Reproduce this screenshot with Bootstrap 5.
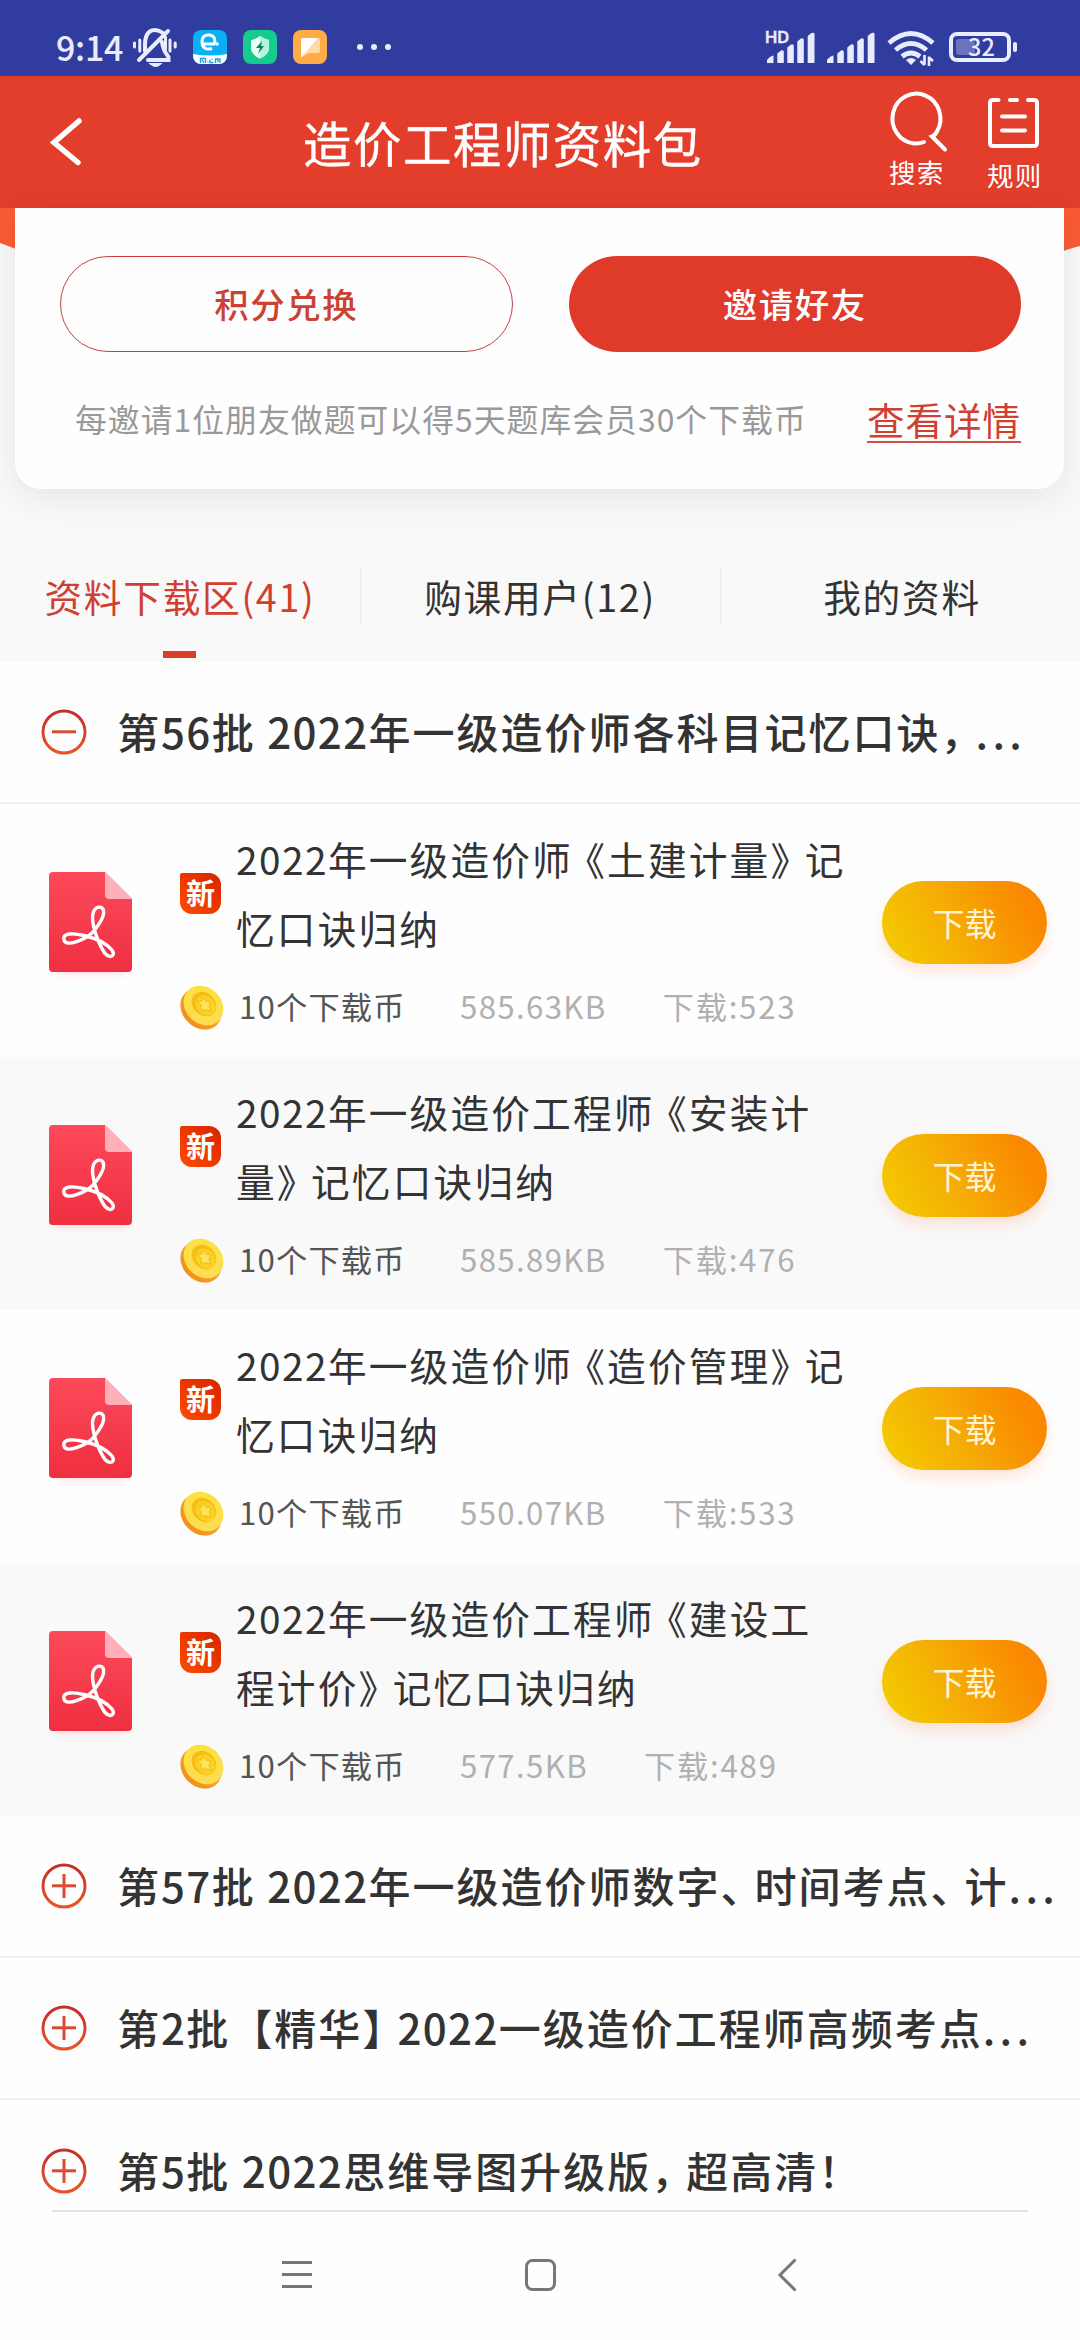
<!DOCTYPE html>
<html lang="zh-CN">
<head>
<meta charset="utf-8">
<meta name="viewport" content="width=device-width, initial-scale=1">
<title>造价工程师资料包</title>
<link href="https://cdn.jsdelivr.net/npm/bootstrap@5.3.0/dist/css/bootstrap.min.css" rel="stylesheet">
<style>
body{width:1080px;height:2340px;overflow:hidden;background:#fefefe;color:#333;font-family:"Noto Sans CJK SC",sans-serif;line-height:1}
svg{display:block;flex:none}
.t{white-space:nowrap}
.statusbar{height:76px;background:#303d9e;color:#e9ecff}
.clock{font-size:34px;line-height:40px;margin:27px 0 0 56px;width:76px;font-weight:500;letter-spacing:-.3px}
.topbar{height:132px;background:#e33d2b;color:#fff}
.page-title{font-size:48.5px;letter-spacing:1.45px;line-height:60px;margin:36px 0 0 -1px;font-weight:400;-webkit-text-stroke:.4px #fff}
.tool{font-size:26.5px;line-height:30px;letter-spacing:1.2px}
.hero{height:454px;background:#f9f9f9;position:relative}
.hero-bg{position:absolute;left:0;top:0}
.panel{position:relative;width:1049px;height:281px;margin-left:15px;background:#fefefe;border-radius:0 0 26px 26px;box-shadow:0 8px 36px rgba(0,0,0,.085);padding:48px 43px 0 45px}
.pill{height:96px;width:452.5px;border-radius:48px;font-size:34.4px;letter-spacing:1.6px;font-weight:500;padding:0 0 2px;line-height:1}
.pill-line,.pill-line:hover{border:1.5px solid #c5403f;color:#cb4234;background:#fefefe}
.pill-fill{border:0;background:#e03b2a;color:#fff}
.note{font-size:31.8px;letter-spacing:1.05px;color:#999;line-height:43px;padding-left:15px}
.detail{font-size:37.5px;letter-spacing:1px;color:#d04030;line-height:43px;border-bottom:2px solid #cf5148;text-decoration:none;height:46px}
.tabs-row{height:128px;margin-top:45px}
.tab-cell{width:360.5px;position:relative;font-size:37.7px;letter-spacing:1.7px;line-height:56px;padding-top:34px;text-align:center;height:128px}
.tab-cell+.tab-cell::before{content:"";position:absolute;left:0;top:34px;width:2px;height:56px;background:#eee}
.tab-cell:last-child{padding-left:4px}
.tab-on{color:#cf4030}
.tab-on::after{content:"";position:absolute;left:163px;bottom:4px;width:33px;height:7px;background:#dc3e2c}
.batch{height:142px;padding-left:41px;border-bottom:2px solid #efefef;background:#fefefe}
.batch .t{margin:-2px 0 0 30px;font-size:42px;letter-spacing:2px;font-weight:500;line-height:60px}
.batch .dots{letter-spacing:4.3px}
.batch .dg{letter-spacing:1.4px}
.batch .cm{letter-spacing:-7px}
.batch .dn{letter-spacing:-8px}
.batch .rb{letter-spacing:-7px}
.last{height:110px;border:0;align-items:flex-start!important;padding-top:48px}
.last .t{margin-top:-8px}
.item{height:253.1px;background:#fefefe;padding:20px 33px 0 49px}
.alt{background:#f9f9f9}
.pdf{margin-top:48px}
.body-col{width:660px;margin-left:47px}
.newtag{flex:none;width:41px;height:41px;margin-top:49px;border-radius:2px 12px 12px 12px;background:linear-gradient(225deg,#d62400,#ff4c00);color:#fff;font-size:29px;font-weight:700;line-height:39px;text-align:center}
.name{font-size:38.7px;letter-spacing:2.15px;line-height:69px;margin-left:15px;color:#333}
.lq,.rq{letter-spacing:-4.5px}
.name .dg{letter-spacing:1.5px}
.meta{font-size:31.2px;letter-spacing:1.8px;line-height:44px;color:#b0b0b0;margin-top:22px}
.meta .cost{color:#555;margin-left:15px;width:221px;letter-spacing:1.2px}
.meta .size{margin-right:56px;letter-spacing:1.35px}
.dl{width:165px;height:83px;margin-top:57px;border:0;border-radius:42px;padding:0 0 2px;background:linear-gradient(62deg,#f3cb00 5%,#f5ae05 42%,#fa8800 85%);color:#fff3d2;font-size:32px;line-height:1;box-shadow:0 8px 14px rgba(255,110,50,.17)}
.navbar-sys{height:130px;background:#fefefe;position:relative}
.rule{height:2px;margin:0 52px;background:#e2e2e2}
</style>
<script src="https://cdn.jsdelivr.net/npm/bootstrap@5.3.0/dist/js/bootstrap.bundle.min.js"></script>
</head>
<body>
<svg width="0" height="0" class="position-absolute">
<defs>
<linearGradient id="gDoc" x1="0" y1="0" x2="0" y2="1"><stop offset="0" stop-color="#fc4a5b"/><stop offset="1" stop-color="#ef2f40"/></linearGradient>
<linearGradient id="gRing" x1="0" y1="0" x2="0" y2="1"><stop offset="0" stop-color="#c4302a"/><stop offset="1" stop-color="#ea5427"/></linearGradient>
<linearGradient id="gCoin" x1="0" y1="0" x2="1" y2="1"><stop offset="0" stop-color="#fde23c"/><stop offset="1" stop-color="#fcdc57"/></linearGradient>
<linearGradient id="gEdge" x1="0" y1="0" x2="0" y2="1"><stop offset="0" stop-color="#f9b233"/><stop offset="1" stop-color="#f28f1c"/></linearGradient>
<symbol id="pdf" viewBox="0 0 84 118">
<rect x="6" y="88" width="72" height="14" rx="7" fill="#ff7080" opacity=".25" style="filter:blur(4px)"/>
<path d="M4 0H56L83 27V96a4 4 0 0 1-4 4H4a4 4 0 0 1-4-4V4a4 4 0 0 1 4-4Z" fill="url(#gDoc)"/>
<path d="M56 0L83 27H60a4 4 0 0 1-4-4Z" fill="#ffb0b8"/>
<path d="M15 68C13 60.500 25 61 35 63.500C48 66.500 57 71 63 78C67 84 61 87 56 81.500C50 73 44 57 43.500 46C43.500 35 51 33 54 37C57 43 49 54 43.500 60.500C37 67 17 76 15 68Z" fill="none" stroke="#fff" stroke-width="3.400" stroke-linejoin="round"/>
</symbol>
<symbol id="coin" viewBox="0 0 44 46">
<ellipse cx="21" cy="25" rx="22.500" ry="18.500" transform="rotate(45 21 25)" fill="url(#gEdge)"/>
<ellipse cx="23.500" cy="21.500" rx="21.500" ry="18" transform="rotate(45 23.500 21.500)" fill="url(#gCoin)"/>
<ellipse cx="24" cy="20" rx="13.500" ry="11" transform="rotate(45 24 20)" fill="#f6bd16"/>
<ellipse cx="25.500" cy="21.500" rx="11" ry="9" transform="rotate(45 25.500 21.500)" fill="#fbd126"/>
<path d="M22 13l4 4 5 1-2 4 2 5-5-1-5 0 0-5-4-4 5 0Z" fill="#fde35a" stroke="#eeb40e" stroke-width=".8"/>
</symbol>
<symbol id="ring" viewBox="0 0 46 46"><circle cx="23" cy="23" r="21" fill="none" stroke="url(#gRing)" stroke-width="3"/><rect x="11" y="21.3" width="24" height="3" fill="#dc4a34"/></symbol>
<symbol id="bars" viewBox="0 0 48 32"><path d="M0 31V28Q3 24 6.500 23.500V31ZM10.300 31V21.500L14 18.500Q16.800 17.500 16.800 20V31ZM20.300 31V15.500L24 12.500Q26.800 11.500 26.800 14V31ZM30.300 31V9.500L34 6.500Q36.800 5.500 36.800 8V31ZM40.700 31V4L44.500 1Q47.500 0 47.500 2V31Z" fill="#e9ecff"/></symbol>
</defs>
</svg>

<div class="statusbar d-flex">
  <div class="clock t">9:14</div>
  <svg width="250" height="76" viewBox="132 0 250 76" fill="none">
    <g stroke="#e9ecff" stroke-width="4" stroke-linecap="round">
      <path d="M134.500 43v4M139.800 40v11M170 40v11M175.200 43v4M165.500 37v12" stroke-width="3"/>
      <path d="M145 51V45C145 26 158 29 163 33M162 42Q163 50 168.500 57V60H148M139 60L168 31"/>
      <path d="M151 64h9q-4 4-9 0Z" fill="#e9ecff" stroke-width="2"/>
    </g>
    <rect x="193" y="30" width="34" height="34" rx="8" fill="#09b0f5"/>
    <path d="M193 54q17 3 34 0v2a8 8 0 0 1-8 8h-18a8 8 0 0 1-8-8Z" fill="#fff"/>
    <path d="M203 44H214Q217 37 210 35Q202 34 202 42.500Q203 51 212 48.500" stroke="#fff" stroke-width="3"/><circle cx="217" cy="44" r="1.800" fill="#fff"/>
    <path d="M200.500 63v-4.500h5V63M202 60l2 2.500M208 61.500v1M210 59.500v3h3.500M212 58.500v1M215.500 63v-4h4.500v4M217 61h2" stroke="#159fe0" stroke-width="1.300"/>
    <rect x="243" y="30" width="34" height="34" rx="8" fill="#17ca8e"/>
    <path d="M260 36q5 3.500 9 4v9q-1 6-9 9.500q-8-3.500-9-9.500v-9q4-.5 9-4Z" fill="#e8fff5"/><path d="M260 36q5 3.500 9 4v9q-1 6-9 9.500Z" fill="#b3f5dc"/>
    <path d="M262 41l-6 7h4l-2 6 6-8h-3Z" fill="#147b5e"/>
    <rect x="293" y="30" width="34" height="34" rx="8" fill="#ffab46"/>
    <path d="M301 40q0-2 2-2h15q2 0 2 2v11q0 2-2 2h-9l-8 4.500Z" fill="#ffd9a8"/><path d="M301 40q0-2 2-2h15L301 57.500Z" fill="#fff"/>
    <g fill="#e9ecff"><circle cx="360" cy="47" r="3"/><circle cx="374" cy="47" r="3"/></g>
  </svg>
  <svg width="20" height="76"><circle cx="6" cy="47" r="3" fill="#e9ecff"/></svg>
  <svg class="ms-auto" width="320" height="76" viewBox="760 0 320 76" fill="none">
    <text x="765" y="43" font-size="16.500" font-weight="600" fill="#e9ecff" stroke="#e9ecff" stroke-width=".4" font-family="Inter,sans-serif">HD</text>
    <use href="#bars" x="767" y="32" width="48" height="32"/><use href="#bars" x="827" y="32" width="48" height="32"/>
    <g stroke="#e9ecff" stroke-width="4.800"><path d="M889 43Q911 24 933 43M895.500 50Q911 37 926.500 50M902 56.500Q911 49.500 920 56.500"/></g>
    <path d="M906 60q5-4 10 0l-5 5Z" fill="#e9ecff"/>
    <path d="M924.500 55v10M924.500 65l-4-4M929 66v-9.500M929 57.500l4 3.500" stroke="#e9ecff" stroke-width="2.600"/>
    <rect x="951" y="34" width="58" height="26" rx="6" stroke="#e9ecff" stroke-width="4"/>
    <rect x="956" y="39" width="19" height="16" rx="3" fill="#6a73bd"/>
    <rect x="1013" y="42" width="4" height="10" rx="2" fill="#e9ecff"/>
    <text x="968" y="56" font-size="23.500" font-weight="500" fill="#e9ecff" font-family="Noto Sans CJK SC,sans-serif">32</text>
  </svg>
</div>

<header class="topbar d-flex">
  <svg width="304" height="132" fill="none" stroke="#fff" stroke-width="5.500" stroke-linecap="round"><path d="M79 45L54 66.500L78 86.500"/></svg>
  <h1 class="page-title t">造价工程师资料包</h1>
  <div class="ms-auto d-flex">
    <div class="tool t" style="width:99px">
      <svg width="99" height="80" viewBox="888 76 99 80" fill="none" stroke="#fff" stroke-width="4" stroke-linecap="round"><path d="M924 142Q919 144 914 143.500A24 25 0 1 1 937 131.500Q935 135.500 932 136.500L945 149.500"/></svg>
      <div style="padding:1px 0 0 1px">搜索</div>
    </div>
    <div class="tool t" style="width:93px">
      <svg width="93" height="80" viewBox="987 76 93 80" fill="none" stroke="#fff" stroke-width="4" stroke-linecap="round"><path d="M998.500 100H993Q990 100 990 103V143Q990 146 993 146H1034Q1037 146 1037 143V103Q1037 100 1034 100H1028M1010 100h7M1002 116.500h23M1002 130.500h23"/></svg>
      <div style="padding-top:4px">规则</div>
    </div>
  </div>
</header>

<section class="hero">
  <svg class="hero-bg" width="1080" height="60"><path d="M0 0H1080V38Q1064 42 1040 52H40Q15 40 0 35Z" fill="#fa5b35"/></svg>
  <div class="panel">
    <div class="d-flex justify-content-between">
      <button class="btn pill pill-line t">积分兑换</button>
      <button class="btn pill pill-fill t">邀请好友</button>
    </div>
    <div class="d-flex justify-content-between" style="padding-top:45px">
      <div class="note t">每邀请1位朋友做题可以得5天题库会员30个下载币</div>
      <a class="detail t" href="#">查看详情</a>
    </div>
  </div>
  <nav class="tabs-row d-flex">
    <div class="tab-cell tab-on t">资料下载区(41)</div>
    <div class="tab-cell t">购课用户(12)</div>
    <div class="tab-cell t">我的资料</div>
  </nav>
</section>

<main>
  <div class="batch d-flex align-items-center"><svg width="46" height="46"><use href="#ring"/></svg><div class="t">第<span class="dg">56</span>批 <span class="dg">2022</span>年一级造价师各科目记忆口诀<span class="cm">，</span><span class="dots">...</span></div></div>

  <article class="item d-flex align-items-start">
    <svg class="pdf" width="84" height="118"><use href="#pdf"/></svg>
    <div class="body-col">
      <div class="d-flex align-items-start"><span class="newtag">新</span><div class="name t"><span class="dg">2022</span>年一级造价<span class="lq">师</span>《土建计量<span class="rq">》</span>记<br>忆口诀归纳</div></div>
      <div class="meta d-flex t"><svg width="44" height="46"><use href="#coin"/></svg><span class="cost">10个下载币</span><span class="size">585.63KB</span><span>下载:523</span></div>
    </div>
    <button class="btn dl t ms-auto">下载</button>
  </article>

  <article class="item alt d-flex align-items-start">
    <svg class="pdf" width="84" height="118"><use href="#pdf"/></svg>
    <div class="body-col">
      <div class="d-flex align-items-start"><span class="newtag">新</span><div class="name t"><span class="dg">2022</span>年一级造价工程<span class="lq">师</span>《安装计<br>量<span class="rq">》</span>记忆口诀归纳</div></div>
      <div class="meta d-flex t"><svg width="44" height="46"><use href="#coin"/></svg><span class="cost">10个下载币</span><span class="size">585.89KB</span><span>下载:476</span></div>
    </div>
    <button class="btn dl t ms-auto">下载</button>
  </article>

  <article class="item d-flex align-items-start">
    <svg class="pdf" width="84" height="118"><use href="#pdf"/></svg>
    <div class="body-col">
      <div class="d-flex align-items-start"><span class="newtag">新</span><div class="name t"><span class="dg">2022</span>年一级造价<span class="lq">师</span>《造价管理<span class="rq">》</span>记<br>忆口诀归纳</div></div>
      <div class="meta d-flex t"><svg width="44" height="46"><use href="#coin"/></svg><span class="cost">10个下载币</span><span class="size">550.07KB</span><span>下载:533</span></div>
    </div>
    <button class="btn dl t ms-auto">下载</button>
  </article>

  <article class="item alt d-flex align-items-start">
    <svg class="pdf" width="84" height="118"><use href="#pdf"/></svg>
    <div class="body-col">
      <div class="d-flex align-items-start"><span class="newtag">新</span><div class="name t"><span class="dg">2022</span>年一级造价工程<span class="lq">师</span>《建设工<br>程计价<span class="rq">》</span>记忆口诀归纳</div></div>
      <div class="meta d-flex t"><svg width="44" height="46"><use href="#coin"/></svg><span class="cost">10个下载币</span><span class="size">577.5KB</span><span>下载:489</span></div>
    </div>
    <button class="btn dl t ms-auto">下载</button>
  </article>

  <div class="batch d-flex align-items-center"><svg width="46" height="46"><use href="#ring"/><rect x="21.500" y="11" width="3" height="24" fill="#dc4a34"/></svg><div class="t">第<span class="dg">57</span>批 <span class="dg">2022</span>年一级造价师数字<span class="dn">、</span>时间考点<span class="dn">、</span>计<span class="dots">...</span></div></div>
  <div class="batch d-flex align-items-center"><svg width="46" height="46"><use href="#ring"/><rect x="21.500" y="11" width="3" height="24" fill="#dc4a34"/></svg><div class="t">第<span class="dg">2</span>批【精华<span class="rb">】</span><span class="dg">2022</span>一级造价工程师高频考点<span class="dots">...</span></div></div>
  <div class="batch last d-flex"><svg width="46" height="46"><use href="#ring"/><rect x="21.500" y="11" width="3" height="24" fill="#dc4a34"/></svg><div class="t">第<span class="dg">5</span>批 <span class="dg">2022</span>思维导图升级版<span class="cm">，</span>超高清！</div></div>
</main>

<footer class="navbar-sys">
  <div class="rule"></div>
  <svg width="1080" height="128" viewBox="0 2212 1080 128" fill="none" stroke="#777" stroke-width="3"><path d="M282 2262.500h30M282 2274.500h30M282 2286.500h30"/><rect x="526.500" y="2260.500" width="28" height="29" rx="6"/><path d="M795.500 2259.500L780 2275L795.500 2290.500"/></svg>
</footer>
</body>
</html>
